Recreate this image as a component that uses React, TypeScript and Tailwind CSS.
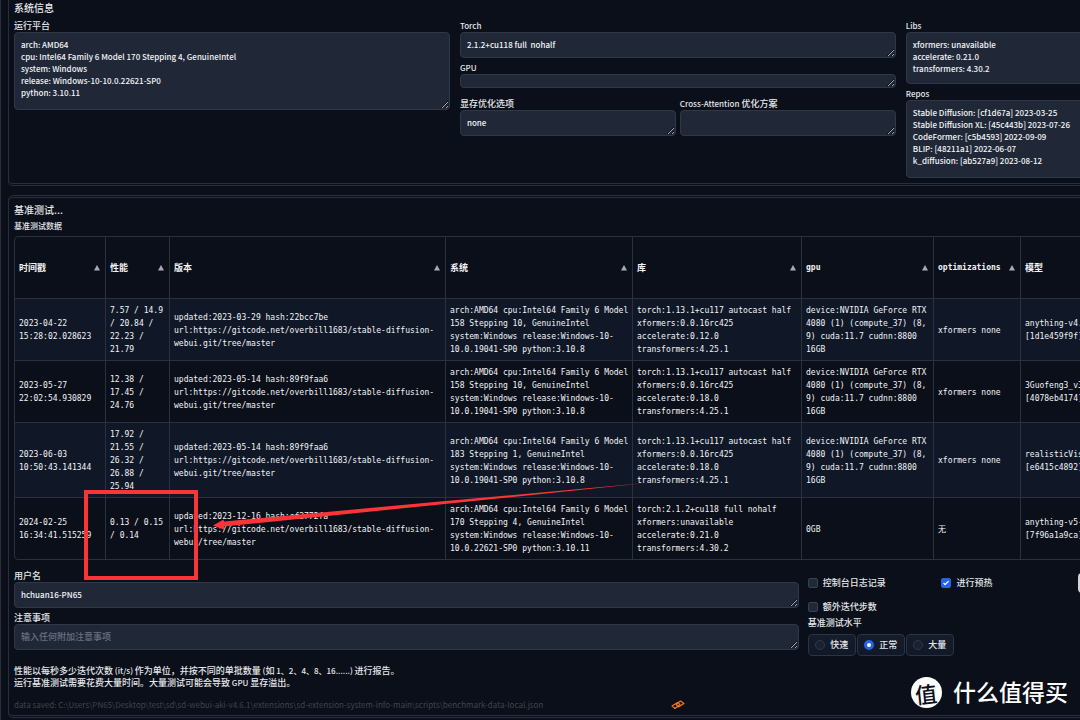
import React, { useState } from 'react';

interface BenchRow {
  timestamp: string;
  performance: string;
  version: string;
  system: string;
  libraries: string;
  gpu: string;
  optimizations: string;
  model: string;
}

const rows: BenchRow[] = [
  {
    timestamp: '2023-04-22\n15:28:02.028623',
    performance: '7.57 / 14.9\n/ 20.84 /\n22.23 /\n21.79',
    version: 'updated:2023-03-29 hash:22bcc7be\nurl:https://gitcode.net/overbill1683/stable-diffusion-\nwebui.git/tree/master',
    system: 'arch:AMD64 cpu:Intel64 Family 6 Model\n158 Stepping 10, GenuineIntel\nsystem:Windows release:Windows-10-\n10.0.19041-SP0 python:3.10.8',
    libraries: 'torch:1.13.1+cu117 autocast half\nxformers:0.0.16rc425\naccelerate:0.12.0\ntransformers:4.25.1',
    gpu: 'device:NVIDIA GeForce RTX\n4080 (1) (compute_37) (8,\n9) cuda:11.7 cudnn:8800\n16GB',
    optimizations: 'xformers none',
    model: 'anything-v4.\n[1d1e459f9f]',
  },
  {
    timestamp: '2023-05-27\n22:02:54.930829',
    performance: '12.38 /\n17.45 /\n24.76',
    version: 'updated:2023-05-14 hash:89f9faa6\nurl:https://gitcode.net/overbill1683/stable-diffusion-\nwebui.git/tree/master',
    system: 'arch:AMD64 cpu:Intel64 Family 6 Model\n158 Stepping 10, GenuineIntel\nsystem:Windows release:Windows-10-\n10.0.19041-SP0 python:3.10.8',
    libraries: 'torch:1.13.1+cu117 autocast half\nxformers:0.0.16rc425\naccelerate:0.18.0\ntransformers:4.25.1',
    gpu: 'device:NVIDIA GeForce RTX\n4080 (1) (compute_37) (8,\n9) cuda:11.7 cudnn:8800\n16GB',
    optimizations: 'xformers none',
    model: '3Guofeng3_v3\n[4078eb4174]',
  },
  {
    timestamp: '2023-06-03\n10:50:43.141344',
    performance: '17.92 /\n21.55 /\n26.32 /\n26.88 /\n25.94',
    version: 'updated:2023-05-14 hash:89f9faa6\nurl:https://gitcode.net/overbill1683/stable-diffusion-\nwebui.git/tree/master',
    system: 'arch:AMD64 cpu:Intel64 Family 6 Model\n183 Stepping 1, GenuineIntel\nsystem:Windows release:Windows-10-\n10.0.19041-SP0 python:3.10.8',
    libraries: 'torch:1.13.1+cu117 autocast half\nxformers:0.0.16rc425\naccelerate:0.18.0\ntransformers:4.25.1',
    gpu: 'device:NVIDIA GeForce RTX\n4080 (1) (compute_37) (8,\n9) cuda:11.7 cudnn:8800\n16GB',
    optimizations: 'xformers none',
    model: 'realisticVis\n[e6415c4892]',
  },
  {
    timestamp: '2024-02-25\n16:34:41.515259',
    performance: '0.13 / 0.15\n/ 0.14',
    version: 'updated:2023-12-16 hash:cf2772fa\nurl:https://gitcode.net/overbill1683/stable-diffusion-\nwebui/tree/master',
    system: 'arch:AMD64 cpu:Intel64 Family 6 Model\n170 Stepping 4, GenuineIntel\nsystem:Windows release:Windows-10-\n10.0.22621-SP0 python:3.10.11',
    libraries: 'torch:2.1.2+cu118 full nohalf\nxformers:unavailable\naccelerate:0.21.0\ntransformers:4.30.2',
    gpu: '0GB',
    optimizations: '无',
    model: 'anything-v5-\n[7f96a1a9ca]',
  },
];

const columns: { key: keyof BenchRow; label: string; width: string }[] = [
  { key: 'timestamp', label: '时间戳', width: 'w-[91px]' },
  { key: 'performance', label: '性能', width: 'w-[64px]' },
  { key: 'version', label: '版本', width: 'w-[276px]' },
  { key: 'system', label: '系统', width: 'w-[187px]' },
  { key: 'libraries', label: '库', width: 'w-[169px]' },
  { key: 'gpu', label: 'gpu', width: 'w-[132px]' },
  { key: 'optimizations', label: 'optimizations', width: 'w-[87px]' },
  { key: 'model', label: '模型', width: 'w-auto' },
];

interface FieldProps {
  id: string;
  label: React.ReactNode;
  value?: string;
  placeholder?: string;
  height?: string;
}

function Field({ id, label, value = '', placeholder, height = 'h-[26px]' }: FieldProps) {
  return (
    <div className="flex min-w-0 flex-col">
      <label htmlFor={id} className="leading-3">{label}</label>
      <textarea
        id={id}
        defaultValue={value}
        placeholder={placeholder}
        rows={1}
        className={`block w-full resize overflow-hidden rounded-[4px] border border-[#2f3849] bg-[#202838] px-[6px] py-[6px] text-[8px] leading-3 text-[#f3f4f6] outline-none placeholder:text-[9px] placeholder:text-[#6b7280] ${height}`}
      />
    </div>
  );
}

// latin text runs one step smaller than the Chinese around it
function Latin({ children }: { children: React.ReactNode }) {
  return <span className="text-[8px]">{children}</span>;
}

function Panel({ className, children }: { className: string; children: React.ReactNode }) {
  return (
    <section className={`border-[#2a2d3e] ${className}`}>
      {children}
    </section>
  );
}

function CheckItem({ label, initial = false }: { label: string; initial?: boolean }) {
  const [checked, setChecked] = useState(initial);
  return (
    <label className="flex h-5 items-center gap-[5px]">
      <span className="relative flex size-[10px]">
        <input
          type="checkbox"
          checked={checked}
          onChange={(e) => setChecked(e.target.checked)}
          className="size-[10px] appearance-none rounded-[2px] border border-[#374151] bg-[#1f2937] checked:border-[#2563eb] checked:bg-[#2563eb]"
        />
        {checked && (
          <svg viewBox="0 0 16 16" className="pointer-events-none absolute inset-0 size-[10px]" fill="white">
            <path d="M12.207 4.793a1 1 0 0 1 0 1.414l-5 5a1 1 0 0 1-1.414 0l-2-2a1 1 0 0 1 1.414-1.414L6.5 9.086l4.293-4.293a1 1 0 0 1 1.414 0z" />
          </svg>
        )}
      </span>
      <span>{label}</span>
    </label>
  );
}

function LevelPicker() {
  const [level, setLevel] = useState('正常');
  return (
    <fieldset>
      <legend className="leading-3">基准测试水平</legend>
      <div className="mt-[5px] flex gap-px">
        {['快速', '正常', '大量'].map((name) => (
          <label
            key={name}
            className="flex h-[22px] w-12 items-center justify-center gap-[5px] rounded-[4px] border border-[#2b3444] bg-gradient-to-b from-[#151c2b] to-[#111827]"
          >
            <input
              type="radio"
              name="level"
              checked={level === name}
              onChange={() => setLevel(name)}
              className="size-[10px] appearance-none rounded-full border border-[#303a4b] bg-[#1a2130] checked:border-[3px] checked:border-[#2563eb] checked:bg-white"
            />
            <span>{name}</span>
          </label>
        ))}
      </div>
    </fieldset>
  );
}

function BenchTable() {
  return (
    <div className="mt-1 overflow-hidden rounded-[4px] border border-[#2b3040]">
      <table className="w-full table-fixed border-separate border-spacing-0 text-left font-['DejaVu_Sans_Mono','Noto_Sans_CJK_SC',monospace] text-[8px] leading-[13px] font-normal text-[#f3f4f6]">
        <thead>
          <tr className="h-[62px]">
            {columns.map((col) => (
              <th key={col.key} className={`border-r border-b border-[#2b3040] px-1 font-bold last:border-r-0 ${col.width}`}>
                <div className="flex items-center justify-between">
                  <span className={col.label.charCodeAt(0) > 255 ? "font-['Noto_Sans_CJK_SC',sans-serif] text-[9px]" : ''}>{col.label}</span>
                  <svg viewBox="0 0 10 10" className="mr-px size-[6px] shrink-0" fill="#a5abb8">
                    <path d="M5 0 L10 9 H0 Z" />
                  </svg>
                </div>
              </th>
            ))}
          </tr>
        </thead>
        <tbody>
          {rows.map((row) => (
            <tr key={row.timestamp} className="group h-[62px] odd:bg-[#101828] last:h-[61px]">
              {columns.map((col) => (
                <td
                  key={col.key}
                  className="border-r border-b border-[#2b3040] pt-[5px] pb-1 pl-1 whitespace-pre last:border-r-0 group-last:border-b-0"
                >
                  {row[col.key]}
                </td>
              ))}
            </tr>
          ))}
        </tbody>
      </table>
    </div>
  );
}

// hand-drawn marks laid over the newest result
function Marks() {
  return (
    <>
      <div className="pointer-events-none absolute top-[490px] left-[83px] h-[90px] w-[114px] border-4 border-[#fb3537]" />
      <svg className="pointer-events-none absolute top-[480px] left-[209px]" width="440" height="52" viewBox="210 480 440 52">
        <path d="M213 525.5 L223.5 519.5 L224 521.5 L440 501.5 L648 482.8 L440 504.5 L224 526.5 L224 529.5 Z" fill="#fb3537" />
      </svg>
    </>
  );
}

function Watermark() {
  return (
    <div className="pointer-events-none absolute top-[677px] right-3 flex items-start gap-[11px] text-white">
      <span className="flex size-[31px] items-center justify-center rounded-full bg-white text-[22px] leading-7 font-medium text-[#0b0f19]">
        <span className="-rotate-6">值</span>
      </span>
      <span className="text-[23px] leading-7">什么值得买</span>
    </div>
  );
}

export default function App() {
  return (
    <div className="relative min-h-screen overflow-hidden border-l border-[#2a2d3e] bg-[#0b0f19] font-['Noto_Sans_CJK_SC',sans-serif] text-[9px] font-medium text-[#e5e7eb]">
      <div className="w-[125%] pr-[2px] pl-[7px]">
        <Panel className="rounded-b-[5px] border border-t-0 pb-px">
          <div className="rounded-b-[4px] border-b border-[#2a2d3e] px-[5px] pb-[5px]">
            <h2 className="text-[10px] leading-4">系统信息</h2>
            <div className="mt-1 grid grid-cols-3 items-start gap-[10px]">
              <Field
                id="platform"
                label="运行平台"
                height="h-[78px]"
                value={'arch: AMD64\ncpu: Intel64 Family 6 Model 170 Stepping 4, GenuineIntel\nsystem: Windows\nrelease: Windows-10-10.0.22621-SP0\npython: 3.10.11'}
              />
              <div>
                <Field id="torch" label={<Latin>Torch</Latin>} value="2.1.2+cu118 full  nohalf" />
                <div className="mt-1">
                  <Field id="gpu" label={<Latin>GPU</Latin>} height="h-[14px]" />
                </div>
                <div className="mt-[10px] grid grid-cols-2 gap-1">
                  <Field id="vram" label="显存优化选项" value="none" />
                  <Field id="cross" label={<><Latin>Cross-Attention</Latin> 优化方案</>} />
                </div>
              </div>
              <div className="flex flex-col gap-1">
                <Field
                  id="libs"
                  label={<Latin>Libs</Latin>}
                  height="h-[52px]"
                  value={'xformers: unavailable\naccelerate: 0.21.0\ntransformers: 4.30.2'}
                />
                <Field
                  id="repos"
                  label={<Latin>Repos</Latin>}
                  height="h-[78px]"
                  value={'Stable Diffusion: [cf1d67a] 2023-03-25\nStable Diffusion XL: [45c443b] 2023-07-26\nCodeFormer: [c5b4593] 2022-09-09\nBLIP: [48211a1] 2022-06-07\nk_diffusion: [ab527a9] 2023-08-12'}
                />
              </div>
            </div>
          </div>
        </Panel>

        <Panel className="mt-[9px] rounded-[5px] border py-px">
          <div className="rounded-[4px] border-y border-[#2a2d3e] px-[5px] py-1">
            <h2 className="text-[10px] leading-4">基准测试...</h2>
            <p className="mt-0.5 text-[8px] leading-3">基准测试数据</p>
            <BenchTable />

            <div className="mt-[10px] grid grid-cols-[3fr_1fr_1fr] gap-[9px] pr-[2px]">
              <div className="flex flex-col gap-1">
                <Field id="username" label="用户名" value="hchuan16-PN65" />
                <Field id="note" label="注意事项" placeholder="输入任何附加注意事项" />
              </div>
              <div className="pt-[3px]">
                <div className="grid grid-cols-2 gap-x-[6px] gap-y-1">
                  <CheckItem label="控制台日志记录" />
                  <CheckItem label="进行预热" initial />
                  <CheckItem label="额外迭代步数" />
                </div>
                <LevelPicker />
              </div>
              <div className="pt-[3px]">
                <button type="button" aria-label="运行" className="block h-5 w-full rounded-[4px] bg-[#d1d5db]" />
              </div>
            </div>

            <p className="mt-[9px] leading-3">
              性能以每秒多少迭代次数<Latin> (it/s) </Latin>作为单位，并按不同的单批数量<Latin> (</Latin>如<Latin> 1、2、4、8、16......) </Latin>进行报告。
              <br />
              运行基准测试需要花费大量时间。大量测试可能会导致<Latin> GPU </Latin>显存溢出。
            </p>
            <div className="mt-[10px] flex items-center">
              <p className="flex-1 text-[8px] leading-3 font-normal text-[#40444e]">
                data saved: C:\Users\PN65\Desktop\test\sd\sd-webui-aki-v4.6.1\extensions\sd-extension-system-info-main\scripts\benchmark-data-local.json
              </p>
              <svg width="14" height="10" viewBox="0 0 14 10" fill="none" stroke="#f97316" strokeWidth="1.2" strokeLinejoin="round">
                <path d="M1 6 L6.5 2.5 L9 4.5 L4 8.5 Z" />
                <path d="M5 4 L9.5 1 L13 3.5 L7.5 7 Z" />
              </svg>
              <span className="flex-1" />
            </div>
          </div>
        </Panel>
      </div>

      <Marks />
      <Watermark />
    </div>
  );
}
